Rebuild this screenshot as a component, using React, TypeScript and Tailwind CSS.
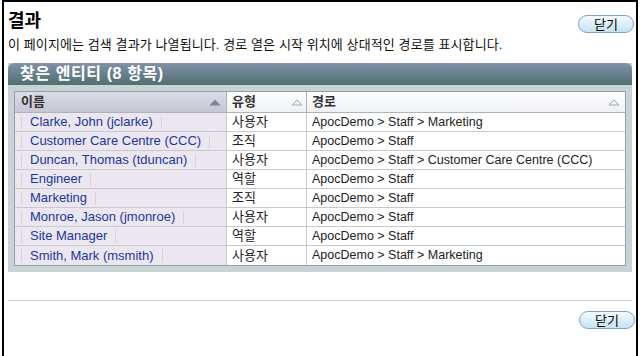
const font = "font-['Liberation_Sans','Noto_Sans_CJK_KR',sans-serif]"

type Row = { name: string; kind: string; path: string }

const rows: Row[] = [
  { name: 'Clarke, John (jclarke)', kind: '사용자', path: 'ApocDemo > Staff > Marketing' },
  { name: 'Customer Care Centre (CCC)', kind: '조직', path: 'ApocDemo > Staff' },
  { name: 'Duncan, Thomas (tduncan)', kind: '사용자', path: 'ApocDemo > Staff > Customer Care Centre (CCC)' },
  { name: 'Engineer', kind: '역할', path: 'ApocDemo > Staff' },
  { name: 'Marketing', kind: '조직', path: 'ApocDemo > Staff' },
  { name: 'Monroe, Jason (jmonroe)', kind: '사용자', path: 'ApocDemo > Staff' },
  { name: 'Site Manager', kind: '역할', path: 'ApocDemo > Staff' },
  { name: 'Smith, Mark (msmith)', kind: '사용자', path: 'ApocDemo > Staff > Marketing' },
]

function CloseButton() {
  return (
    <button className="flex h-[18px] w-[56px] items-center justify-center rounded-full border border-[#7f9fcf] bg-gradient-to-b from-[#f4fbff] to-[#c6e2f2] text-[13px] leading-none text-black">
      닫기
    </button>
  )
}

function SortIcon({ active }: { active?: boolean }) {
  return (
    <svg width="12" height="7" viewBox="0 0 12 7">
      {active ? (
        <polygon points="6,0.5 11.5,6.5 0.5,6.5" fill="#7a8698" />
      ) : (
        <polygon points="6,1 11,6 1,6" fill="none" stroke="#98a8b8" strokeWidth="1" />
      )}
    </svg>
  )
}

function Bar() {
  return <span className="inline-block h-[13px] w-px bg-[#d8d0dc]" />
}

export default function App() {
  return (
    <div className={`h-[356px] w-[640px] overflow-hidden bg-white ${font}`}>
      <div className="ml-[2px] flex h-full w-[636px] flex-col border-x-2 border-t-2 border-black pl-[4px] pr-[2px]">
        <div className="mt-[9px] flex items-start justify-between">
          <h1 className="text-[18px] font-bold leading-[20px] text-black">결과</h1>
          <div className="mt-[4px]">
            <CloseButton />
          </div>
        </div>
        <p className="mt-[4px] text-[13px] leading-[16px] tracking-[0.1px] text-[#111]">
          이 페이지에는 검색 결과가 나열됩니다. 경로 열은 시작 위치에 상대적인 경로를 표시합니다.
        </p>

        <div className="mt-[10px] w-[624px] bg-[#c9d3d3]">
          <div className="flex h-[22px] items-center rounded-t-[6px] bg-gradient-to-b from-[#8190a8] to-[#4f7072] px-[12px] text-[16px] font-bold tracking-[0.6px] text-white">
            찾은 엔티티 (8 항목)
          </div>
          <div className="px-[6px] pb-[6px] pt-[6px]">
            <div className="border border-[#8ea2aa] bg-white">
              <div className="flex h-[21px] text-[13px] font-bold text-[#333]">
                <div className="flex w-[212px] items-center justify-between border-b border-r border-[#a8b6bc] bg-gradient-to-b from-[#dcdce6] to-[#c6c6d4] pl-[6px] pr-[5px]">
                  <span>이름</span>
                  <SortIcon active />
                </div>
                <div className="flex w-[80px] items-center justify-between border-b border-r border-[#a8b6bc] bg-gradient-to-b from-white to-[#eef0f4] pl-[5px] pr-[3px]">
                  <span>유형</span>
                  <SortIcon />
                </div>
                <div className="flex flex-1 items-center justify-between border-b border-[#a8b6bc] bg-gradient-to-b from-white to-[#eef0f4] pl-[5px] pr-[5px]">
                  <span>경로</span>
                  <SortIcon />
                </div>
              </div>
              {rows.map((r, i) => (
                <div
                  key={r.name}
                  className={`flex h-[19px] text-[12.5px] ${i < rows.length - 1 ? 'border-b border-[#c4cccc]' : ''}`}
                >
                  <div className="flex w-[212px] items-center gap-[8px] border-r border-[#c4cccc] bg-[#ece6f0] pl-[6px] text-[13px]">
                    <Bar />
                    <span className="text-[#1a36a0]">{r.name}</span>
                    <Bar />
                  </div>
                  <div className="flex w-[80px] items-center border-r border-[#c4cccc] pl-[5px] text-[13px] text-[#222]">
                    {r.kind}
                  </div>
                  <div className="flex flex-1 items-center pl-[5px] text-[#222]">{r.path}</div>
                </div>
              ))}
            </div>
          </div>
        </div>

        <div className="mt-[28px] h-px w-[624px] bg-[#cccccc]" />
        <div className="mt-[10px] flex w-[627px] justify-end">
          <CloseButton />
        </div>
      </div>
    </div>
  )
}
